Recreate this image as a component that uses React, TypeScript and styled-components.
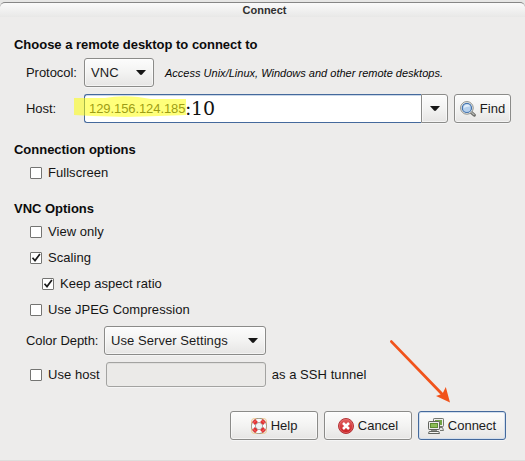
import React from 'react';
import styled, { createGlobalStyle, css } from 'styled-components';

const Global = createGlobalStyle`
  * { box-sizing: border-box; }
  body { margin: 0; background: #edeceb; overflow: hidden; }
`;

const Dialog = styled.main`
  position: relative;
  width: 525px;
  height: 461px;
  background: #edeceb;
  border-bottom: 1px solid #dedddc;
  font: 13px/16px 'Liberation Sans', Arial, sans-serif;
  color: #151515;
  white-space: nowrap;
`;

const Frame = styled.header`
  height: 17px;
  padding-top: 2px;
  background: #e6e6e5;
`;

const TitleBar = styled.div`
  height: 15px;
  border: 1px solid #868686;
  border-width: 1px 0 0;
  border-radius: 5px 5px 0 0;
  background: linear-gradient(#fafafa, #e8e8e7);
  padding-left: 4px;
  text-align: center;
  font-size: 11px;
  line-height: 14px;
  font-weight: bold;
  color: #303030;
`;

const Heading = styled.h2<{ $top: number }>`
  margin: ${p => p.$top}px 0 0 14px;
  height: 16px;
  font-size: 13px;
  line-height: 16px;
  font-weight: bold;
  letter-spacing: -0.02px;
  color: #0b0b0b;
`;

const Row = styled.div<{ $top: number; $height: number; $indent?: number }>`
  display: flex;
  align-items: center;
  margin: ${p => p.$top}px 0 0 ${p => p.$indent ?? 26}px;
  height: ${p => p.$height}px;
`;

const Label = styled.label<{ $width: number }>`
  flex: none;
  width: ${p => p.$width}px;
  letter-spacing: -0.05px;
`;

const raised = css`
  border: 1px solid #8b8b89;
  border-radius: 3px;
  background: linear-gradient(#fcfcfc, #f3f3f2 50%, #e6e5e4);
  box-shadow: inset 0 0 0 1px rgba(255, 255, 255, 0.55), 0 1px 0 #f5f5f5;
  color: #1b1b1b;
  font: inherit;
`;

const Select = styled.button<{ $width: number }>`
  ${raised}
  display: flex;
  align-items: center;
  justify-content: space-between;
  width: ${p => p.$width}px;
  height: 29px;
  padding: 0 7px 0 6px;
  letter-spacing: 0.06px;
`;

const Hint = styled.em`
  margin-left: 11px;
  font-size: 11px;
  line-height: 16px;
  letter-spacing: 0.01px;
  color: #080808;
`;

const HostField = styled.div`
  position: relative;
  display: flex;
  align-items: center;
  width: 337px;
  height: 29px;
  border: 1px solid #44699c;
  border-right: 0;
  border-radius: 3px 0 0 3px;
  background: #fff;
  box-shadow: inset 0 1px 0 #c9d7e8;
`;

const Address = styled.span`
  padding-left: 4px;
  width: 100px;
  letter-spacing: -0.08px;
  color: #303030;
`;

const Port = styled.span`
  font: 19px/24px 'DejaVu Serif', serif;
  letter-spacing: -0.3px;
  color: #111;
  margin-top: -2px;
`;

const Marker = styled.svg`
  position: absolute;
  left: -12px;
  top: 1px;
`;

const DropButton = styled.button`
  ${raised}
  display: grid;
  place-items: center;
  width: 27px;
  height: 29px;
  padding: 0;
  border-radius: 0 3px 3px 0;
`;

const Button = styled.button<{ $width: number; $focus?: boolean }>`
  ${raised}
  display: flex;
  align-items: center;
  justify-content: center;
  gap: 4px;
  width: ${p => p.$width}px;
  height: 29px;
  padding: 0;
  ${p => p.$focus && css`
    border-color: #44699c;
    box-shadow: inset 0 0 0 1px #d2deec, 0 1px 0 #f5f5f5;
  `}
`;

const FindSlot = styled.div`
  margin-left: 6px;
`;

const CheckLabel = styled.label`
  display: flex;
  align-items: center;
  gap: 6px;
  height: 16px;
  letter-spacing: 0.04px;
`;

const CheckRow = styled(CheckLabel)<{ $top: number; $nested?: boolean }>`
  margin: ${p => p.$top}px 0 0 ${p => (p.$nested ? 42 : 30)}px;
`;

const Box = styled.span`
  flex: none;
  display: block;
  width: 12px;
  height: 12px;
  border: 1px solid #747472;
  border-radius: 1px;
  background: #fff;
  svg { display: block; }
`;

const TunnelField = styled.div`
  width: 160px;
  height: 25px;
  margin: 0 6px;
  border: 1px solid #a3a3a1;
  border-radius: 3px;
  background: #ebeae8;
  box-shadow: inset 0 1px 0 #e0dfdd, 0 1px 0 #f5f5f5;
`;

const TunnelText = styled.span`
  letter-spacing: 0.06px;
`;

const Actions = styled.footer`
  display: flex;
  gap: 6px;
  margin: 24px 0 0 230px;
`;

const Pointer = styled.svg`
  position: absolute;
  left: 385px;
  top: 335px;
  pointer-events: none;
`;

const Caret = () => (
  <svg width="10" height="5" viewBox="0 0 10 5"><path d="M0 0H10L6 4.6Q5 5.4 4 4.6Z" fill="#161616" /></svg>
);

const Check = ({ on = false }: { on?: boolean }) => (
  <Box>{on && <svg width="10" height="10" viewBox="0 0 10 10"><path d="M1.5 4.8L4 7.6L8.9 1.1" fill="none" stroke="#1b1b1b" strokeWidth="1.7" /></svg>}</Box>
);

const FindIcon = () => (
  <svg width="16" height="16" viewBox="0 0 16 16">
    <path d="M10.8 11L14.3 14.1" stroke="#686966" strokeWidth="3.1" strokeLinecap="round" />
    <path d="M11.3 11.2L14.1 13.7" stroke="#b5b6b2" strokeWidth="1.2" strokeLinecap="round" />
    <circle cx="6.9" cy="6.9" r="6.3" fill="#f4f5f3" stroke="#888a85" strokeWidth="1" />
    <circle cx="6.9" cy="6.9" r="4.6" fill="#b5d0ed" stroke="#4273ae" strokeWidth="1.2" />
    <path d="M3.8 7.1Q3.8 3.6 7.2 3.5Q9.5 3.6 10 5.6Q7 5.3 3.8 7.1Z" fill="#e0edf9" />
  </svg>
);

const HelpIcon = () => (
  <svg width="16" height="16" viewBox="0 0 16 16">
    <rect x=".5" y=".5" width="15" height="15" rx="3" fill="none" stroke="#efc68c" />
    <circle cx="8" cy="8" r="5.5" fill="none" stroke="#888a85" strokeWidth="4.8" />
    <circle cx="8" cy="8" r="5.5" fill="none" stroke="#fafafa" strokeWidth="3.4" />
    <g stroke="#e23232" strokeWidth="4.2">
      <path d="M2.6 2.6L5.4 5.4M13.4 2.6L10.6 5.4M2.6 13.4L5.4 10.6M13.4 13.4L10.6 10.6" />
    </g>
    <path d="M2.6 4.8L4.8 2.6M11.2 2.6L13.4 4.8M13.4 11.2L11.2 13.4M4.8 13.4L2.6 11.2" stroke="#f78b85" strokeWidth=".8" />
  </svg>
);

const CancelIcon = () => (
  <svg width="16" height="16" viewBox="0 0 16 16">
    <defs><linearGradient id="cancelRed" x2="0" y2="1"><stop stopColor="#e36363" /><stop offset="1" stopColor="#c71c20" /></linearGradient></defs>
    <circle cx="8" cy="8" r="7.5" fill="url(#cancelRed)" stroke="#b23438" />
    <circle cx="8" cy="8" r="6.6" fill="none" stroke="#e77777" strokeWidth=".6" />
    <path d="M5 5L11 11M11 5L5 11" stroke="#fff" strokeWidth="2.5" />
  </svg>
);

const ConnectIcon = () => (
  <svg width="16" height="16" viewBox="0 0 16 16">
    <rect x="5.5" y=".5" width="10" height="8" rx=".7" fill="#eeeeec" stroke="#73766f" />
    <rect x="7" y="2" width="7" height="5" fill="#73a546" />
    <path d="M12 9.5H14.5L15.5 12.5H12" fill="#e5e5e2" stroke="#747670" />
    <rect x=".5" y="3.5" width="11" height="8" rx=".7" fill="#eeeeec" stroke="#60635d" />
    <rect x="2.5" y="5.5" width="7" height="4" fill="#8bbd55" stroke="#5c8c32" />
    <path d="M3 12.5H9" stroke="#8a8c86" />
    <path d="M1.2 13.5H10.8L11.5 15.5H.5Z" fill="#f5f5f3" stroke="#60635d" />
  </svg>
);

export default function App() {
  return (
    <>
      <Global />
      <Dialog>
        <Frame><TitleBar>Connect</TitleBar></Frame>
        <Heading $top={20}>Choose a remote desktop to connect to</Heading>
        <Row $top={5} $height={29}>
          <Label $width={58}>Protocol:</Label>
          <Select $width={70}>VNC<Caret /></Select>
          <Hint>Access Unix/Linux, Windows and other remote desktops.</Hint>
        </Row>
        <Row $top={7} $height={29}>
          <Label $width={58}>Host:</Label>
          <HostField>
            <Address>129.156.124.185</Address>
            <Port>:10</Port>
            <Marker width="114" height="22" viewBox="0 0 114 22">
              <path d="M1 2H32Q47-1 65 1L78 3H113V19L86 20L53 21L20 20L1 19Z" fill="#ffff00" fillOpacity=".52" />
            </Marker>
          </HostField>
          <DropButton aria-label="Recent hosts"><Caret /></DropButton>
          <FindSlot><Button $width={57}><FindIcon />Find</Button></FindSlot>
        </Row>
        <Heading $top={19}>Connection options</Heading>
        <CheckRow $top={7}><Check />Fullscreen</CheckRow>
        <Heading $top={20}>VNC Options</Heading>
        <CheckRow $top={7}><Check />View only</CheckRow>
        <CheckRow $top={10}><Check on />Scaling</CheckRow>
        <CheckRow $top={10} $nested><Check on />Keep aspect ratio</CheckRow>
        <CheckRow $top={10}><Check />Use JPEG Compression</CheckRow>
        <Row $top={8} $height={29}>
          <Label $width={78}>Color Depth:</Label>
          <Select $width={162}>Use Server Settings<Caret /></Select>
        </Row>
        <Row $top={7} $height={25} $indent={30}>
          <CheckLabel><Check />Use host</CheckLabel>
          <TunnelField />
          <TunnelText>as a SSH tunnel</TunnelText>
        </Row>
        <Actions>
          <Button $width={88}><HelpIcon />Help</Button>
          <Button $width={88}><CancelIcon />Cancel</Button>
          <Button $width={88} $focus><ConnectIcon />Connect</Button>
        </Actions>
        <Pointer width="70" height="72" viewBox="0 0 70 72">
          <path d="M6.4 6.6L57 59" stroke="#f1531b" strokeWidth="2.8" strokeLinecap="round" />
          <path d="M65 67.4L51 61L57.5 58.8L60.8 52Z" fill="#f1531b" />
        </Pointer>
      </Dialog>
    </>
  );
}
